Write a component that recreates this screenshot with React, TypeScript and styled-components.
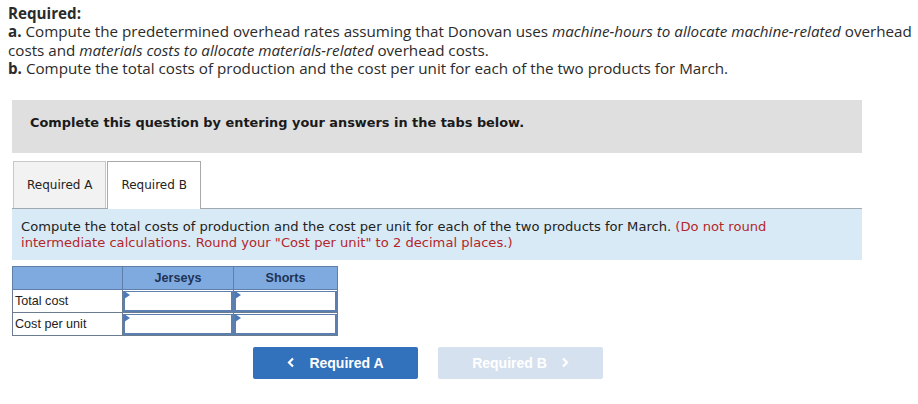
import React from "react";
import styled, { createGlobalStyle } from "styled-components";

const Global = createGlobalStyle`
  html, body { margin: 0; padding: 0; background: #fff; }
  body { font-family: "Open Sans", "Liberation Sans", sans-serif; }
`;

const Page = styled.div`
  width: 918px;
  height: 404px;
  box-sizing: border-box;
  padding: 4px 0 0 8px;
  background: #fff;
  overflow: hidden;
`;

const Intro = styled.div`
  font-family: "Open Sans", sans-serif;
  font-size: 15.2px;
  line-height: 18.4px;
  color: #2b2b2b;
  padding-right: 2px;
  b { font-weight: 700; }
  i { font-style: italic; }
`;

const Content = styled.div`
  width: 850px;
  margin: 22px 0 0 4px;
  display: flex;
  flex-direction: column;
  align-items: flex-start;
`;

const Banner = styled.div`
  align-self: stretch;
  background: #dfdfdf;
  height: 53px;
  box-sizing: border-box;
  display: flex;
  align-items: center;
  padding: 0 0 8px 18px;
  font-family: "DejaVu Sans", Verdana, sans-serif;
  font-weight: 700;
  font-size: 12.9px;
  color: #1a1a1a;
`;

const TabRow = styled.div`
  display: flex;
  margin-top: 8px;
  height: 47px;
  align-items: flex-end;
`;

const Tab = styled.div<{ $active?: boolean }>`
  box-sizing: border-box;
  height: 47px;
  display: flex;
  align-items: center;
  justify-content: center;
  padding: 0 13px;
  font-family: "DejaVu Sans", Verdana, sans-serif;
  font-size: 12px;
  color: #222;
  border: 1px solid #c8c8c8;
  border-bottom: none;
  background: ${(p) => (p.$active ? "#fff" : "#f2f2f2")};
  margin-left: 1px;
  position: relative;
  ${(p) => (p.$active ? "border-color:#a9a9a9; height:48px; margin-bottom:-1px; z-index:1;" : "")}
`;

const Info = styled.div`
  align-self: stretch;
  border-top: 1px solid #a0a8b0;
  background: #d9eaf7;
  padding: 10px 60px 9px 9px;
  font-family: "DejaVu Sans", Verdana, sans-serif;
  font-size: 13.1px;
  line-height: 16px;
  color: #222;
`;

const Red = styled.span`
  color: #b3262a;
`;

const Table = styled.table`
  margin-top: 6px;
  border-collapse: collapse;
  table-layout: fixed;
  width: 325px;
  font-family: "Liberation Sans", Arial, sans-serif;
  font-size: 12.6px;
`;

const Th = styled.th`
  height: 23px;
  box-sizing: border-box;
  background: #7eaae0;
  border: 1px solid #5f7fa6;
  color: #1e3355;
  font-weight: 700;
  font-size: 12.6px;
  text-align: center;
  padding: 0;
`;

const Label = styled.td`
  height: 22px;
  border: 1px solid #6b7c90;
  padding: 0 2px;
  color: #222;
  background: #fff;
`;

const InputCell = styled.td`
  border: 1px solid #6b7c90;
  padding: 1px 0 0;
  background: #fff;
`;

const InputBox = styled.div`
  position: relative;
  box-sizing: border-box;
  height: 21px;
  border: 2px solid #5b7fae;
  border-top-width: 1px;
  background: #fff;
  &::before {
    content: "";
    position: absolute;
    left: -1px;
    top: -1px;
    border-left: 6px solid #4a78b8;
    border-top: 4px solid transparent;
    border-bottom: 4px solid transparent;
  }
`;

const Nav = styled.div`
  display: flex;
  gap: 20px;
  margin: 11px 0 0 241px;
`;

const NavButton = styled.div<{ $disabled?: boolean }>`
  width: 165px;
  height: 32px;
  border-radius: 2px;
  display: flex;
  align-items: center;
  justify-content: center;
  gap: 14px;
  font-family: "Liberation Sans", Arial, sans-serif;
  font-weight: 700;
  font-size: 14px;
  color: #fff;
  background: ${(p) => (p.$disabled ? "#d6e1ef" : "#3271bc")};
`;

const Chevron = ({ dir }: { dir: "left" | "right" }) => (
  <svg width="8" height="11" viewBox="0 0 8 11">
    <path
      d={dir === "left" ? "M6 1.5 L2 5.5 L6 9.5" : "M2 1.5 L6 5.5 L2 9.5"}
      fill="none"
      stroke="#fff"
      strokeWidth="2.2"
    />
  </svg>
);

export default function App() {
  return (
    <Page>
      <Global />
      <Intro>
        <b>Required:</b>
        <br />
        <b>a.</b> Compute the predetermined overhead rates assuming that Donovan uses{" "}
        <i>machine-hours to allocate machine-related</i> overhead costs and{" "}
        <i>materials costs to allocate materials-related</i> overhead costs.
        <br />
        <b>b.</b> Compute the total costs of production and the cost per unit for each of the two
        products for March.
      </Intro>
      <Content>
        <Banner>Complete this question by entering your answers in the tabs below.</Banner>
        <TabRow>
          <Tab>Required A</Tab>
          <Tab $active>Required B</Tab>
        </TabRow>
        <Info>
          Compute the total costs of production and the cost per unit for each of the two products
          for March.{" "}
          <Red>(Do not round intermediate calculations. Round your "Cost per unit" to 2 decimal places.)</Red>
        </Info>
        <Table>
          <colgroup>
            <col style={{ width: 110 }} />
            <col style={{ width: 111 }} />
            <col style={{ width: 104 }} />
          </colgroup>
          <thead>
            <tr>
              <Th></Th>
              <Th>Jerseys</Th>
              <Th>Shorts</Th>
            </tr>
          </thead>
          <tbody>
            {["Total cost", "Cost per unit"].map((r) => (
              <tr key={r}>
                <Label>{r}</Label>
                <InputCell>
                  <InputBox />
                </InputCell>
                <InputCell>
                  <InputBox />
                </InputCell>
              </tr>
            ))}
          </tbody>
        </Table>
        <Nav>
          <NavButton>
            <Chevron dir="left" />
            Required A
          </NavButton>
          <NavButton $disabled>
            Required B
            <Chevron dir="right" />
          </NavButton>
        </Nav>
      </Content>
    </Page>
  );
}
